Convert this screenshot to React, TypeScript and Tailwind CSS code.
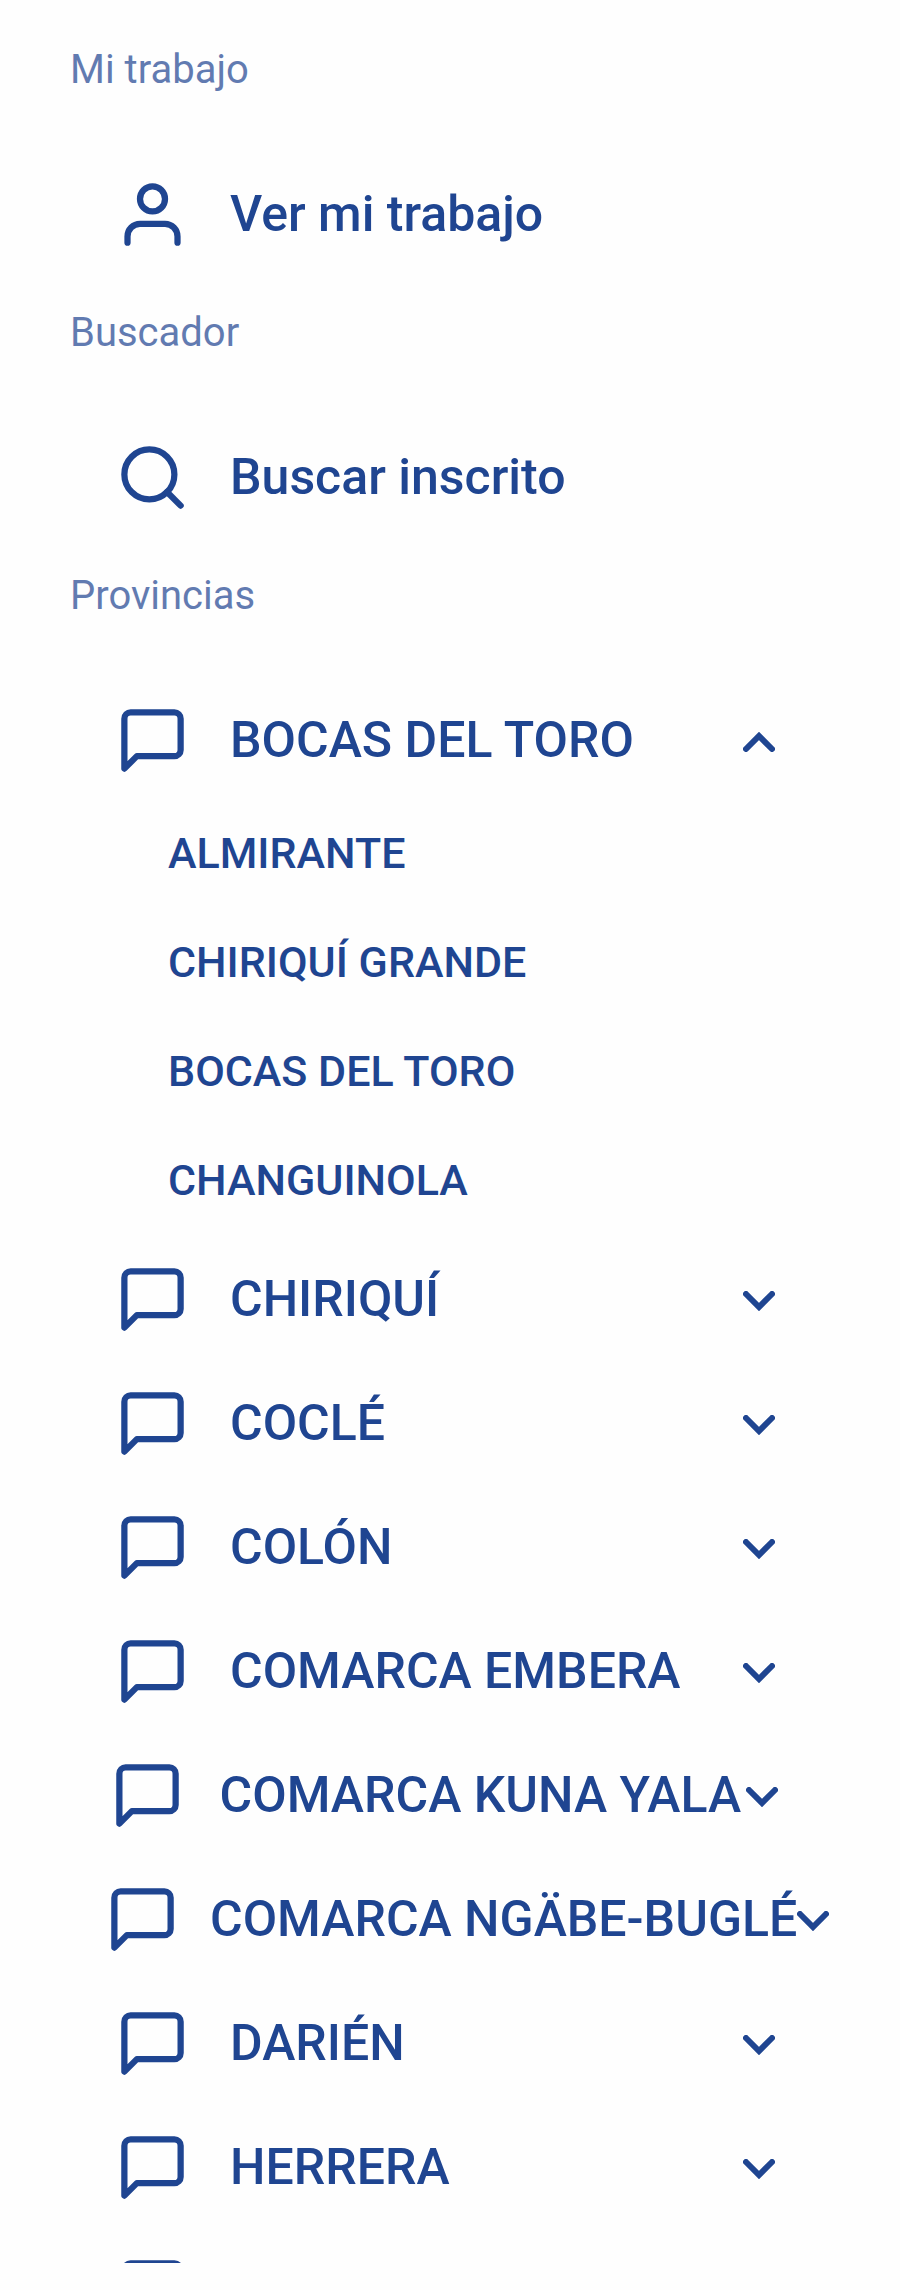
import { useState } from "react"

interface Province {
  name: string
  districts: string[]
}

const PROVINCES: Province[] = [
  {
    name: "BOCAS DEL TORO",
    districts: ["ALMIRANTE", "CHIRIQUÍ GRANDE", "BOCAS DEL TORO", "CHANGUINOLA"],
  },
  { name: "CHIRIQUÍ", districts: [] },
  { name: "COCLÉ", districts: [] },
  { name: "COLÓN", districts: [] },
  { name: "COMARCA EMBERA", districts: [] },
  { name: "COMARCA KUNA YALA", districts: [] },
  { name: "COMARCA NGÄBE-BUGLÉ", districts: [] },
  { name: "DARIÉN", districts: [] },
  { name: "HERRERA", districts: [] },
]

const ROW =
  "flex h-[124px] w-full items-center pl-[105px] pr-[118px] text-left text-[50px] leading-none font-medium whitespace-nowrap"

function Icon({ children }: { children: React.ReactNode }) {
  return (
    <span className="mr-[30px] flex w-[95px] min-w-[75px] justify-center">
      <svg
        viewBox="0 0 24 24"
        className="h-[75px] w-[75px] shrink-0"
        fill="none"
        stroke="currentColor"
        strokeWidth="2"
        strokeLinecap="round"
        strokeLinejoin="round"
        aria-hidden="true"
      >
        {children}
      </svg>
    </span>
  )
}

function MessageIcon() {
  return (
    <Icon>
      <path d="M21 15a2 2 0 0 1-2 2H7l-4 4V5a2 2 0 0 1 2-2h14a2 2 0 0 1 2 2z" />
    </Icon>
  )
}

function Chevron({ open }: { open: boolean }) {
  return (
    <span className="flex w-[46px] min-w-8 justify-center pt-1">
      <svg
        viewBox="0 0 32 20"
        className="h-5 w-8 shrink-0"
        fill="none"
        stroke="currentColor"
        strokeWidth="6"
        strokeLinecap="round"
        aria-hidden="true"
      >
        <path d={open ? "M3 17 16 4 29 17" : "M3 3 16 16 29 3"} />
      </svg>
    </span>
  )
}

function Heading({ children }: { children: React.ReactNode }) {
  return <h2 className="mb-[52px] px-[70px] text-[40px] leading-[60px] opacity-70">{children}</h2>
}

export default function App() {
  const [open, setOpen] = useState("BOCAS DEL TORO")

  return (
    <aside className="h-screen bg-[#fefefe] pb-[27px] font-[Roboto,sans-serif] text-[#1f4591]">
      <nav className="h-full overflow-hidden pt-10">
        <section className="mb-[27px]">
          <Heading>Mi trabajo</Heading>
          <a href="#trabajo" className={ROW}>
            <Icon>
              <path d="M20 21v-2a4 4 0 0 0-4-4H8a4 4 0 0 0-4 4v2" />
              <circle cx="12" cy="7" r="4" />
            </Icon>
            <span>Ver mi trabajo</span>
          </a>
        </section>

        <section className="mb-[27px]">
          <Heading>Buscador</Heading>
          <a href="#buscar" className={ROW}>
            <Icon>
              <circle cx="11" cy="11" r="8" />
              <path d="m21 21-4.35-4.35" />
            </Icon>
            <span>Buscar inscrito</span>
          </a>
        </section>

        <section>
          <Heading>Provincias</Heading>
          <ul>
            {PROVINCES.map((province) => {
              const isOpen = open === province.name
              return (
                <li key={province.name}>
                  <button
                    type="button"
                    aria-expanded={isOpen}
                    onClick={() => setOpen(isOpen ? "" : province.name)}
                    className={ROW}
                  >
                    <MessageIcon />
                    <span className="shrink-0 grow">{province.name}</span>
                    <Chevron open={isOpen} />
                  </button>
                  {isOpen && province.districts.length > 0 && (
                    <ul className="-mt-px">
                      {province.districts.map((district) => (
                        <li key={district}>
                          <a
                            href="#distrito"
                            className="flex h-[109px] items-center pb-1 pl-[168px] text-[43px] font-medium"
                          >
                            {district}
                          </a>
                        </li>
                      ))}
                    </ul>
                  )}
                </li>
              )
            })}
          </ul>
          {/* next row, only its top edge shows above the fold */}
          <div className={ROW} aria-hidden="true">
            <MessageIcon />
          </div>
        </section>
      </nav>
    </aside>
  )
}
